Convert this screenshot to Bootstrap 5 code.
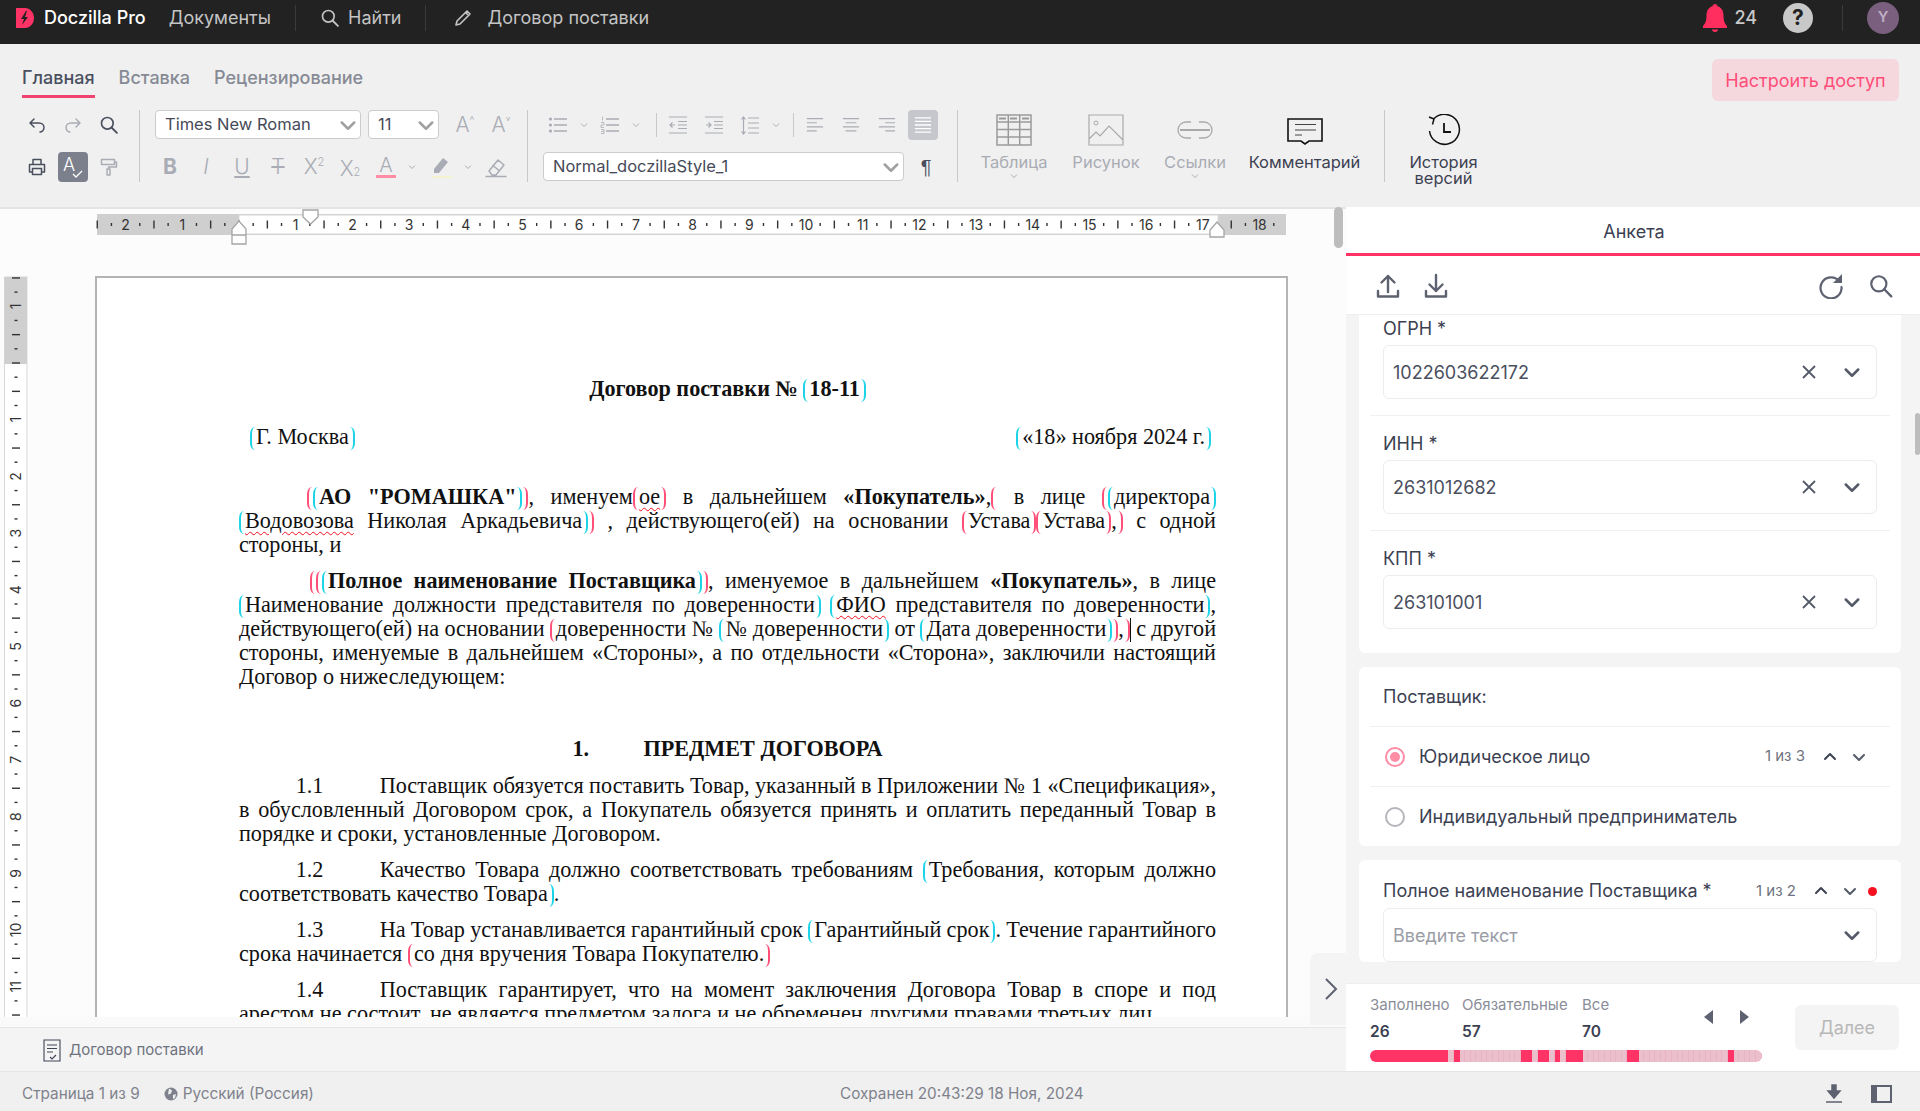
<!DOCTYPE html>
<html lang="ru">
<head>
  <meta charset="UTF-8" />
  <title>Doczilla Pro</title>
  <link href="https://cdn.jsdelivr.net/npm/bootstrap@5.3.3/dist/css/bootstrap.min.css" rel="stylesheet" />
  <style>
    body { font-family:Inter,"Noto Sans",sans-serif; height:1111px; overflow:hidden; color:#3c4152; background:#f0f0f0; }
    svg { display:block; }
    .ico { fill:none; stroke:currentColor; stroke-width:1.5; stroke-linecap:round; stroke-linejoin:round; }

    .topbar { height:44px; background:#222; color:#c4c4c4; font-size:18px; padding:0 0 9px 16px; flex:none; }
    .brand { color:#fff; font-size:18px; font-weight:500; margin-left:10px; margin-right:23px; }
    .top-sep { width:1px; height:26px; background:#3a3a3a; }
    .top-alert { color:#c8c8c8; font-weight:500; margin-left:6px; }
    .help { width:30px; height:30px; border-radius:50%; background:#c8c8c8; color:#222; font-weight:700; font-size:21px; margin-left:26px; margin-right:29px; }
    .ava { width:32px; height:32px; border-radius:50%; background:#7a5f7e; color:#bfaec3; font-weight:600; font-size:15px; }
    .top-right { padding-right:21px; }
    .pen { margin-left:27px; margin-right:14px; }

    .ribbon { height:163px; background:#f0f0f0; flex:none; }
    .rib-top { height:66px; padding-left:22px; padding-right:21px; }
    .rtab { margin-top:20px; height:34px; line-height:28px; margin-right:24px; font-size:18px; font-weight:500; color:#868a95; }
    .rtab.on { color:#4a4f5e; height:34px; border-bottom:3px solid #f0446f; }
    .share { margin-top:15px; height:42px; width:187px; background:#f5d8de; color:#ff4d78; border-radius:6px; font-size:18px; }
    .tools { height:72px; padding-left:19px; }
    .g1 { width:120px; } .g2 { width:372px; } .g3 { width:414px; }
    .rsep { width:1px; height:72px; background:#c9c9c9; flex:none; }
    .g2,.g3 { margin-left:15px; }
    .trow { height:30px; } .trow + .trow { margin-top:12px; }
    .tb { width:36px; height:30px; color:#a9acb4; font-size:21px; flex:none; font-weight:300; }
    .tb.dk { color:#4a4f5e; }
    .tb sup,.tb sub { font-size:11px; }
    .pil { font-family:"Liberation Sans",sans-serif; font-size:20px; }
    .neg { margin-left:-3px; }
    .erase { margin-left:2px; }
    .cr { width:16px; color:#a9acb4; flex:none; }
    .pick { background:#fff; border:1px solid #ccc; border-radius:4px; height:29px; padding:0 2px 0 9px; font-size:16.5px; color:#464a58; }
    .pick svg { color:#a0a0a0; }
    .p-font { width:206px; } .p-size { width:71px; margin-left:7px; margin-right:4px; } .p-style { width:361px; margin-right:4px; }
    .vl1,.vl2 { width:1px; height:24px; background:#c9c9c9; }
    .vl1 { margin:0 3px 0 12px; } .vl2 { margin:0 3px 0 9px; }
    .spell { width:30px; height:30px; margin:0 3px; background:#7b808c; color:#fff; border-radius:4px; }
    .just { width:30px; height:30px; margin:0 3px; background:#c5c7cc; color:#fff; border-radius:4px; }
    .big { height:97px; text-align:center; font-size:16.5px; line-height:16px; color:#a9acb4; flex:none; }
    .big svg.pic { margin:4px auto 8px; }
    .big.dk { color:#3c4152; }
    .b1 { width:112px; } .b2 { width:72px; } .b3 { width:106px; } .b4 { width:113px; margin-right:23px; } .b5 { width:117px; }
    .big .cr { margin:1px auto 0; }

    .work { min-height:0; }
    .leftside { width:1346px; flex:none; }
    .docview { background:#fcfcfc; border-top:2px solid #e4e4e4; min-height:0; overflow:hidden; }
    .pagerow { min-height:0; }
    .sheet { width:1193px; height:900px; background:#fff; border:2px solid #b4b4b4; border-bottom:0; padding:99px 70px 0 142px; font-family:"Liberation Serif",serif; font-size:22.2px; line-height:24px; color:#111; flex:none; }
    .one { height:24px; white-space:nowrap; }
    .city { padding-left:11px; padding-right:5px; }
    .ln { height:24px; text-align:justify; text-align-last:justify; white-space:nowrap; word-spacing:-1px; }
    .ln.end { text-align-last:left; word-spacing:0; }
    .gap12 { margin-top:12px; } .gap13 { margin-top:13px; } .gap36 { margin-top:36px; } .gap48 { margin-top:48px; }
    .ind { padding-left:68px; } .ind2 { padding-left:71px; }
    .num { display:inline-block; width:84px; margin-left:56.7px; }
    .sec-no { display:inline-block; width:71px; text-align:left; }
    .bo,.bc { display:inline-block; width:6px; height:23px; vertical-align:-6px; border-style:solid; border-width:0; }
    .bo { border-left-width:2px; border-radius:5px 0 0 5px / 7px 0 0 7px; }
    .bc { border-right-width:2px; border-radius:0 5px 5px 0 / 0 7px 7px 0; }
    .cy { border-color:#1cd3e8; } .rd { border-color:#ff5079; }
    .wav { text-decoration:underline wavy #f01020; text-decoration-thickness:1px; text-underline-offset:3px; }
    .caret-bar { display:inline-block; width:1px; height:24px; background:#111; vertical-align:-6px; }

    .toggle { position:absolute; right:0; top:746px; width:36px; height:72px; background:#f4f4f4; border-radius:8px 0 0 0; color:#5d6170; padding-left:6px; }
    .vscroll { position:absolute; top:0; right:3px; width:9px; height:41px; background:#bdbdbd; border-radius:5px; }
    .tabstrip { height:10px; background:#fafafa; flex:none; }
    .doctabs { height:44px; background:#f4f4f4; flex:none; border-top:1px solid #e6e6e6; font-size:15px; color:#6f7380; padding:2px 0 0 43px; }

    .panel { width:574px; background:#f4f4f4; }
    .ptitle { height:49px; background:#fff; border-bottom:3px solid #ff3366; font-size:18px; padding:3px 0 0 2px; }
    .ptools { height:59px; background:#fff; color:#5d6170; border-bottom:1px solid #eee; padding:2px 26px 0 30px; flex:none; }
    .ptools svg + svg { margin-left:24px; }
    .pbody { background:#f4f4f4; overflow:hidden; min-height:0; padding:0 19px 0 13px; }
    .sect { background:#fff; border-radius:0 0 6px 6px; padding:0 24px; margin-bottom:14px; }
    .sect-first { padding-top:2px; }
    .sect2 { border-radius:6px; padding:0 11px; }
    .fld-lab { font-size:18px; line-height:24px; }
    .fld { height:54px; border:1px solid #ececec; border-radius:6px; padding:0 14px 0 9px; font-size:18px; color:#4a4f5e; }
    .fld input { border:0; outline:0; padding:0; background:none; font-size:18px; color:#4a4f5e; min-width:0; }
    .fld input::placeholder { color:#9a9da6; opacity:1; }
    .fld svg { color:#555a68; }
    .x-ic { margin-right:25px; }
    .hr1 { height:1px; background:#f0f0f0; margin:16px -13px 0; }
    .sec-head { height:59px; padding-left:13px; font-size:18px; }
    .rad-row { height:60px; border-top:1px solid #f0f0f0; padding:0 23px 0 15px; font-size:18px; }
    .rad { width:20px; height:20px; border-radius:50%; border:2px solid #b4b6bb; margin-right:14px; flex:none; }
    .rad.on { border-color:#ff8ba5; position:relative; }
    .rad.on::after { content:""; position:absolute; inset:3px; border-radius:50%; background:#ff8ba5; }
    .cnt { font-size:15px; color:#6f7380; margin-right:17px; }
    .chev2 { color:#555a68; margin-left:13px; }
    .dot { width:9px; height:9px; border-radius:50%; background:#f5101f; margin-left:10px; }
    .sect-top { padding-top:19px; }
    .fld-gap { margin-top:5px; }
    .pfoot { height:88px; background:#fff; border-top:1px solid #eee; flex:none; padding:12px 21px 0 24px; }
    .st-lab { font-size:15px; color:#8a8d99; line-height:18px; }
    .st-num { font-size:15.500px; font-weight:600; line-height:20px; margin-top:8px; }
    .st1 { width:92px; } .st2 { width:120px; } .st3 { width:60px; }
    .bar { width:392px; height:12px; border-radius:6px; overflow:hidden; margin-top:8px; }
    .seg { flex:1 1 0; background:#ecbfcc; box-shadow:inset -1px 0 #e8b4c3; }
    .seg.fill { background:#ff3366; box-shadow:none; }
    .tris { margin-left:62px; padding-top:14px; }
    .tri { width:0; height:0; border-style:solid; border-color:transparent; border-width:7px 0; }
    .tri.l { border-right:9px solid #5d6170; } .tri.r { border-left:9px solid #5d6170; margin-left:27px; }
    .next { width:104px; height:45px; background:#f4f4f4; color:#b8b8b8; border-radius:6px; font-size:18px; margin-top:9px; }
    .pagethumb { position:absolute; right:0; top:206px; width:5px; height:42px; background:#bdbdbd; border-radius:3px; }

    .status { height:40px; background:#f0f0f0; border-top:1px solid #e4e4e4; flex:none; font-size:15.3px; color:#7f828c; padding:5px 28px 0 22px; }
    .st-left { width:818px; }
    .globe { margin:0 5px 0 24px; }
    .st-ic { color:#5d6170; }
    .st-ic2 { margin-left:28px; }
  </style>
</head>
<body class="d-flex flex-column">

  <svg width="0" height="0" class="position-absolute">
    <symbol id="chev" viewBox="0 0 16 16"><path d="M3 6l5 5 5-5" fill="none" stroke="currentColor" stroke-width="2" stroke-linecap="round" stroke-linejoin="round"/></symbol>
    <symbol id="chevup" viewBox="0 0 16 16"><path d="M3 10l5-5 5 5" fill="none" stroke="currentColor" stroke-width="2" stroke-linecap="round" stroke-linejoin="round"/></symbol>
    <symbol id="thin" viewBox="0 0 10 10"><path d="M2 3.500l3 3 3-3" fill="none" stroke="currentColor" stroke-width="1"/></symbol>
    <symbol id="cross" viewBox="0 0 16 16"><path d="M2 2l12 12M14 2L2 14" fill="none" stroke="currentColor" stroke-width="1.800"/></symbol>
    <symbol id="search" viewBox="0 0 24 24"><circle cx="10" cy="10" r="7" fill="none" stroke="currentColor" stroke-width="2"/><path d="M15 15l6.500 6.500" fill="none" stroke="currentColor" stroke-width="2.200" stroke-linecap="round"/></symbol>
    <symbol id="lines-l" viewBox="0 0 20 20"><path d="M1 3h18M1 7.500h11M1 12h18M1 16.500h11" stroke="currentColor" stroke-width="1.300"/></symbol>
    <symbol id="lines-c" viewBox="0 0 20 20"><path d="M1 3h18M4 7.500h12M1 12h18M4 16.500h12" stroke="currentColor" stroke-width="1.300"/></symbol>
    <symbol id="lines-r" viewBox="0 0 20 20"><path d="M1 3h18M8 7.500h11M1 12h18M8 16.500h11" stroke="currentColor" stroke-width="1.300"/></symbol>
    <symbol id="lines-j" viewBox="0 0 20 20"><path d="M1 2h18M1 6h18M1 10h18M1 14h18M1 18h18" stroke="currentColor" stroke-width="1.400"/></symbol>
  </svg>

  <header class="topbar d-flex align-items-center">
    <svg width="18" height="20" viewBox="0 0 18 20"><path d="M0 0h9c5 0 9 4.500 9 10s-4 10-9 10H2l-2 0z" fill="#ff3366"/><path d="M10 3L5 11h3l-2 6 6-8H9l2-6z" fill="#222"/></svg>
    <span class="brand">Doczilla Pro</span>
    <span>Документы</span>
    <span class="top-sep ms-4"></span>
    <svg class="ms-4" width="20" height="20"><use href="#search"/></svg>
    <span class="ms-2">Найти</span>
    <span class="top-sep ms-4"></span>
    <svg class="pen" width="20" height="20" viewBox="0 0 20 20"><path d="M3 17l1-4L14 3l3 3L7 16z M12.500 4.500l3 3" fill="none" stroke="currentColor" stroke-width="1.600" stroke-linejoin="round"/></svg>
    <span>Договор поставки</span>
    <div class="ms-auto d-flex align-items-center top-right">
      <svg width="26" height="30" viewBox="0 0 26 30"><path d="M13 1c1.500 0 2.500 1 2.500 2.300C20 4.500 21.500 8.500 21.500 13c0 4.500 1 7.500 3.500 10v2H1v-2c2.500-2.500 3.500-5.500 3.500-10 0-4.500 1.500-8.500 6-9.700C10.500 2 11.500 1 13 1zM10 26.500h6c0 1.500-1.200 2.500-3 2.500s-3-1-3-2.500z" fill="#ff2e5f"/></svg>
      <span class="top-alert">24</span>
      <span class="help d-flex align-items-center justify-content-center">?</span>
      <span class="top-sep me-4"></span>
      <span class="ava d-flex align-items-center justify-content-center">Y</span>
    </div>
  </header>

  <section class="ribbon">
    <div class="rib-top d-flex">
      <div class="rtab on">Главная</div>
      <div class="rtab">Вставка</div>
      <div class="rtab">Рецензирование</div>
      <div class="share ms-auto d-flex align-items-center justify-content-center">Настроить доступ</div>
    </div>
    <div class="tools d-flex">
      <div class="g1">
        <div class="trow d-flex">
          <div class="tb dk d-flex align-items-center justify-content-center"><svg class="ico" width="20" height="20" viewBox="0 0 20 20"><path d="M7 4L3 8l4 4M3 8h9c3 0 5 2 5 4.500S15 17 13 17"/></svg></div>
          <div class="tb d-flex align-items-center justify-content-center"><svg class="ico" width="20" height="20" viewBox="0 0 20 20"><path d="M13 4l4 4-4 4M17 8H8c-3 0-5 2-5 4.500S5 17 7 17"/></svg></div>
          <div class="tb dk d-flex align-items-center justify-content-center"><svg width="20" height="20"><use href="#search"/></svg></div>
        </div>
        <div class="trow d-flex">
          <div class="tb dk d-flex align-items-center justify-content-center"><svg class="ico" width="20" height="20" viewBox="0 0 20 20"><path d="M6 7V2.500h8V7M5 15H2.500V7.500h15V15H15M5.500 11.500h9v6h-9z"/></svg></div>
          <div class="spell d-flex align-items-center justify-content-center"><svg width="24" height="26" viewBox="0 0 24 26"><text x="2" y="17" font-family="Inter" font-size="18" font-weight="300" fill="#fff">A</text><path d="M12 20l3 3 6-6" fill="none" stroke="#fff" stroke-width="1.300"/></svg></div>
          <div class="tb d-flex align-items-center justify-content-center"><svg class="ico" width="20" height="20" viewBox="0 0 20 20"><path d="M2.500 2.500h13v5h-13zM15.500 5h2v5H9.500v2M8 12h3v6H8z"/></svg></div>
        </div>
      </div>
      <div class="rsep ms-0"></div>
      <div class="g2">
        <div class="trow d-flex">
          <div class="pick p-font d-flex align-items-center justify-content-between">Times New Roman<svg width="20" height="20"><use href="#chev"/></svg></div>
          <div class="pick p-size d-flex align-items-center justify-content-between">11<svg width="20" height="20"><use href="#chev"/></svg></div>
          <div class="tb ms-1 d-flex align-items-center justify-content-center">A<sup>^</sup></div>
          <div class="tb d-flex align-items-center justify-content-center">A<sup>˅</sup></div>
        </div>
        <div class="trow d-flex">
          <div class="tb neg fw-bold d-flex align-items-center justify-content-center">B</div>
          <div class="tb fst-italic d-flex align-items-center justify-content-center">I</div>
          <div class="tb text-decoration-underline d-flex align-items-center justify-content-center">U</div>
          <div class="tb text-decoration-line-through d-flex align-items-center justify-content-center">T</div>
          <div class="tb d-flex align-items-center justify-content-center">X<sup>2</sup></div>
          <div class="tb d-flex align-items-center justify-content-center pt-1">X<sub>2</sub></div>
          <div class="tb d-flex align-items-center justify-content-center"><svg width="22" height="26" viewBox="0 0 22 26"><text x="11" y="18" text-anchor="middle" font-family="Inter" font-size="20" font-weight="300" fill="#a9acb4">A</text><rect x="1" y="21" width="20" height="3" fill="#ff8ba5"/></svg></div>
          <div class="cr d-flex align-items-center justify-content-center"><svg width="10" height="10"><use href="#thin"/></svg></div>
          <div class="tb ms-1 d-flex align-items-center justify-content-center"><svg width="22" height="26" viewBox="0 0 22 26"><path d="M3 15L12 4l5 4-9 11H3z" fill="#a9acb4"/><rect x="1" y="22" width="20" height="2" fill="#f3f3cf"/></svg></div>
          <div class="cr d-flex align-items-center justify-content-center"><svg width="10" height="10"><use href="#thin"/></svg></div>
          <div class="tb erase d-flex align-items-center justify-content-center"><svg class="ico" width="22" height="22" viewBox="0 0 22 22"><path d="M4 15L13 4l6 5-8 10H7zM8 9.500l6 5M1 20.500h20"/></svg></div>
        </div>
      </div>
      <div class="rsep"></div>
      <div class="g3">
        <div class="trow d-flex align-items-center">
          <div class="tb neg d-flex align-items-center justify-content-center"><svg width="20" height="20" viewBox="0 0 20 20"><path d="M6 4h13M6 10h13M6 16h13" stroke="currentColor" stroke-width="1.300"/><circle cx="2.500" cy="4" r="1.600" fill="currentColor"/><circle cx="2.500" cy="10" r="1.600" fill="currentColor"/><circle cx="2.500" cy="16" r="1.600" fill="currentColor"/></svg></div>
          <div class="cr d-flex align-items-center justify-content-center"><svg width="10" height="10"><use href="#thin"/></svg></div>
          <div class="tb d-flex align-items-center justify-content-center"><svg width="20" height="20" viewBox="0 0 20 20"><path d="M6 4h13M6 10h13M6 16h13" stroke="currentColor" stroke-width="1.300"/><path d="M2.500 1.500v4M1 7.500h3v2.500H1v2.500h3M1 14.500h3v4H1M1 16.500h3" fill="none" stroke="currentColor" stroke-width="0.800"/></svg></div>
          <div class="cr d-flex align-items-center justify-content-center"><svg width="10" height="10"><use href="#thin"/></svg></div>
          <div class="vl1"></div>
          <div class="tb d-flex align-items-center justify-content-center"><svg width="20" height="20" viewBox="0 0 20 20"><path d="M1 2h18M10 6.500h9M10 10h9M10 13.500h9M1 18h18M7 10H2M4.500 7.500L2 10l2.500 2.500" fill="none" stroke="currentColor" stroke-width="1.200"/></svg></div>
          <div class="tb d-flex align-items-center justify-content-center"><svg width="20" height="20" viewBox="0 0 20 20"><path d="M1 2h18M10 6.500h9M10 10h9M10 13.500h9M1 18h18M2 10h5M4.500 7.500L7 10l-2.500 2.500" fill="none" stroke="currentColor" stroke-width="1.200"/></svg></div>
          <div class="tb d-flex align-items-center justify-content-center"><svg width="20" height="20" viewBox="0 0 20 20"><path d="M8 3h11M8 8h11M8 13h11M8 18h11M3.500 2v17M1.500 4.500l2-2.500 2 2.500M1.500 16.500l2 2.500 2-2.500" fill="none" stroke="currentColor" stroke-width="1.200"/></svg></div>
          <div class="cr d-flex align-items-center justify-content-center"><svg width="10" height="10"><use href="#thin"/></svg></div>
          <div class="vl2"></div>
          <div class="tb d-flex align-items-center justify-content-center"><svg width="18" height="18"><use href="#lines-l"/></svg></div>
          <div class="tb d-flex align-items-center justify-content-center"><svg width="18" height="18"><use href="#lines-c"/></svg></div>
          <div class="tb d-flex align-items-center justify-content-center"><svg width="18" height="18"><use href="#lines-r"/></svg></div>
          <div class="just d-flex align-items-center justify-content-center"><svg width="18" height="18"><use href="#lines-j"/></svg></div>
        </div>
        <div class="trow d-flex">
          <div class="pick p-style d-flex align-items-center justify-content-between">Normal_doczillaStyle_1<svg width="20" height="20"><use href="#chev"/></svg></div>
          <div class="tb dk pil d-flex align-items-center justify-content-center">¶</div>
        </div>
      </div>
      <div class="rsep"></div>
      <div class="big b1">
        <svg class="pic" width="36" height="32" viewBox="0 0 36 32"><path d="M1 1h34v30H1zM1 8h34M1 15.500h34M1 23h34M12.300 1v30M23.700 1v30" fill="none" stroke="#9a9a9a" stroke-width="1.500"/><path d="M3 4.500h7M14 4.500h7M26 4.500h7" stroke="#9a9a9a" stroke-width="2"/></svg>
        Таблица
        <svg class="cr" width="10" height="10"><use href="#thin"/></svg>
      </div>
      <div class="big b2">
        <svg class="pic" width="36" height="32" viewBox="0 0 36 32"><path d="M1 1h34v30H1zM1 25l7-7 4 4 9-10 14 14" fill="none" stroke="#a9a9a9" stroke-width="1.200"/><circle cx="8" cy="9" r="2" fill="none" stroke="#a9a9a9"/></svg>
        Рисунок
      </div>
      <div class="big b3">
        <svg class="pic" width="36" height="32" viewBox="0 0 36 32"><path d="M14 8H9a8 8 0 000 16h5M22 8h5a8 8 0 010 16h-5" fill="none" stroke="#a9a9a9" stroke-width="1.300"/><path d="M3 16h30" stroke="#a9a9a9" stroke-width="2"/></svg>
        Ссылки
        <svg class="cr" width="10" height="10"><use href="#thin"/></svg>
      </div>
      <div class="big b4 dk">
        <svg class="pic" width="36" height="32" viewBox="0 0 36 32"><path d="M1 5h34v22H22l-4 3-4-3H1z" fill="none" stroke="#111" stroke-width="1.600"/><path d="M8 10.500h21M8 16h21M8 21h7" stroke="#444" stroke-width="1.100"/></svg>
        Комментарий
      </div>
      <div class="rsep"></div>
      <div class="big b5 dk">
        <svg class="pic" width="36" height="32" viewBox="0 0 36 32"><path d="M8 4.500A15 15 0 113.500 17M3 3l5 2-1.500 5.500" fill="none" stroke="#111" stroke-width="1.500"/><path d="M18 9v9h7" fill="none" stroke="#111" stroke-width="1.800"/></svg>
        История<br>версий
      </div>
    </div>
  </section>

  <div class="work flex-grow-1 d-flex position-relative">
    <div class="leftside d-flex flex-column position-relative">
      <div class="docview flex-grow-1 d-flex flex-column">
        <svg id="hruler" width="1344" height="67" class="flex-shrink-0"></svg>
        <div class="pagerow flex-grow-1 d-flex">
          <svg id="vruler" width="95" height="760" class="flex-shrink-0"></svg>
          <article class="sheet">
            <div class="one text-center fw-bold">Договор поставки № <i class="bo cy"></i>18-11<i class="bc cy"></i></div>
            <div class="one d-flex justify-content-between city mt-4">
              <span><i class="bo cy"></i>Г. Москва<i class="bc cy"></i></span>
              <span><i class="bo cy"></i>«18» ноября 2024 г.<i class="bc cy"></i></span>
            </div>

            <div class="ln ind gap36"><i class="bo rd"></i><i class="bo cy"></i><b>АО "РОМАШКА"</b><i class="bc cy"></i><i class="bc rd"></i>, именуем<i class="bo rd"></i><span class="wav">ое</span><i class="bc rd"></i> в дальнейшем <b>«Покупатель»</b>,<i class="bo rd"></i> в лице <i class="bo rd"></i><i class="bo cy"></i>директора<i class="bc cy"></i></div>
            <div class="ln"><i class="bo cy"></i><span class="wav">Водовозова</span> Николая Аркадьевича<i class="bc cy"></i><i class="bc rd"></i> , действующего(ей) на основании <i class="bo rd"></i>Устава<i class="bc rd"></i><i class="bo rd"></i>Устава<i class="bc rd"></i>,<i class="bc rd"></i> с одной</div>
            <div class="ln end">стороны, и</div>

            <div class="ln ind2 gap12"><i class="bo rd"></i><i class="bo rd"></i><i class="bo cy"></i><b>Полное наименование Поставщика</b><i class="bc cy"></i><i class="bc rd"></i>, именуемое в дальнейшем <b>«Покупатель»</b>, в лице</div>
            <div class="ln"><i class="bo cy"></i>Наименование должности представителя по доверенности<i class="bc cy"></i> <i class="bo cy"></i><span class="wav">ФИО</span> представителя по доверенности<i class="bc cy"></i>,</div>
            <div class="ln">действующего(ей) на основании <i class="bo rd"></i>доверенности № <i class="bo cy"></i>№ доверенности<i class="bc cy"></i> от <i class="bo cy"></i>Дата доверенности<i class="bc cy"></i><i class="bc rd"></i>,<i class="bc rd"></i><span class="caret-bar"></span> с другой</div>
            <div class="ln">стороны, именуемые в дальнейшем «Стороны», а по отдельности «Сторона», заключили настоящий</div>
            <div class="ln end">Договор о нижеследующем:</div>

            <div class="one text-center fw-bold gap48"><span class="sec-no">1.</span>ПРЕДМЕТ ДОГОВОРА</div>

            <div class="ln gap13"><span class="num">1.1</span>Поставщик обязуется поставить Товар, указанный в Приложении № 1 «Спецификация»,</div>
            <div class="ln">в обусловленный Договором срок, а Покупатель обязуется принять и оплатить переданный Товар в</div>
            <div class="ln end">порядке и сроки, установленные Договором.</div>

            <div class="ln gap12"><span class="num">1.2</span>Качество Товара должно соответствовать требованиям <i class="bo cy"></i>Требования, которым должно</div>
            <div class="ln end">соответствовать качество Товара<i class="bc cy"></i>.</div>

            <div class="ln gap12"><span class="num">1.3</span>На Товар устанавливается гарантийный срок <i class="bo cy"></i>Гарантийный срок<i class="bc cy"></i>. Течение гарантийного</div>
            <div class="ln end">срока начинается <i class="bo rd"></i>со дня вручения Товара Покупателю.<i class="bc rd"></i></div>

            <div class="ln gap12"><span class="num">1.4</span>Поставщик гарантирует, что на момент заключения Договора Товар в споре и под</div>
            <div class="ln end">арестом не состоит, не является предметом залога и не обременен другими правами третьих лиц.</div>
          </article>
        </div>
      </div>
      <div class="tabstrip"></div>
      <div class="doctabs d-flex align-items-center">
        <svg width="18" height="23" viewBox="0 0 18 23"><path d="M1 1h16v21H1zM4 6h10M4 9.500h10M4 13h6M7 18l2 2 4-4" fill="none" stroke="#3f4454" stroke-width="1.100"/></svg>
        <span class="ms-2">Договор поставки</span>
      </div>
      <div class="vscroll"></div>
      <div class="toggle d-flex align-items-center justify-content-center"><svg width="14" height="24" viewBox="0 0 14 24"><path d="M2 2l10 10L2 22" fill="none" stroke="currentColor" stroke-width="2"/></svg></div>
    </div>

    <aside class="panel flex-grow-1 d-flex flex-column position-relative">
      <div class="ptitle d-flex align-items-center justify-content-center flex-shrink-0">Анкета</div>
      <div class="ptools d-flex align-items-center">
        <svg width="24" height="26" viewBox="0 0 24 26"><path d="M12 19V3M5.500 9.500L12 3l6.500 6.500M2 18v5.500h20V18" fill="none" stroke="currentColor" stroke-width="2.400" stroke-linecap="round" stroke-linejoin="round"/></svg>
        <svg width="24" height="26" viewBox="0 0 24 26"><path d="M12 2v16M5.500 11.500L12 18l6.500-6.500M2 18v5.500h20V18" fill="none" stroke="currentColor" stroke-width="2.400" stroke-linecap="round" stroke-linejoin="round"/></svg>
        <svg class="ms-auto" width="26" height="26" viewBox="0 0 26 26"><path d="M21 8A10.500 10.500 0 1023.500 14" fill="none" stroke="currentColor" stroke-width="2.200" stroke-linecap="round"/><path d="M24 1v9h-9z" fill="currentColor"/></svg>
        <svg width="26" height="26"><use href="#search"/></svg>
      </div>
      <div class="pbody flex-grow-1">
        <div class="sect sect-first">
          <div class="fld-lab">ОГРН *</div>
          <div class="fld d-flex align-items-center mt-1"><input class="flex-grow-1" value="1022603622172"><svg class="x-ic" width="16" height="16"><use href="#cross"/></svg><svg width="20" height="20"><use href="#chev"/></svg></div>
          <div class="hr1"></div>
          <div class="fld-lab mt-3">ИНН *</div>
          <div class="fld d-flex align-items-center mt-1"><input class="flex-grow-1" value="2631012682"><svg class="x-ic" width="16" height="16"><use href="#cross"/></svg><svg width="20" height="20"><use href="#chev"/></svg></div>
          <div class="hr1"></div>
          <div class="fld-lab mt-3">КПП *</div>
          <div class="fld d-flex align-items-center mt-1"><input class="flex-grow-1" value="263101001"><svg class="x-ic" width="16" height="16"><use href="#cross"/></svg><svg width="20" height="20"><use href="#chev"/></svg></div>
          <div class="pb-4"></div>
        </div>
        <div class="sect sect2">
          <div class="sec-head d-flex align-items-center">Поставщик:</div>
          <div class="rad-row d-flex align-items-center">
            <span class="rad on"></span>Юридическое лицо
            <span class="cnt ms-auto">1 из 3</span>
            <svg width="16" height="16"><use href="#chevup"/></svg>
            <svg class="chev2" width="16" height="16"><use href="#chev"/></svg>
          </div>
          <div class="rad-row d-flex align-items-center"><span class="rad"></span>Индивидуальный предприниматель</div>
        </div>
        <div class="sect rounded-top">
          <div class="d-flex align-items-center sect-top">
            <span class="fld-lab">Полное наименование Поставщика *</span>
            <span class="cnt ms-auto">1 из 2</span>
            <svg width="16" height="16"><use href="#chevup"/></svg>
            <svg class="chev2" width="16" height="16"><use href="#chev"/></svg>
            <span class="dot"></span>
          </div>
          <div class="fld d-flex align-items-center fld-gap"><input class="flex-grow-1" placeholder="Введите текст"><svg width="20" height="20"><use href="#chev"/></svg></div>
        </div>
      </div>
      <div class="pfoot d-flex justify-content-between">
        <div>
          <div class="d-flex">
            <div class="st1"><div class="st-lab">Заполнено</div><div class="st-num">26</div></div>
            <div class="st2"><div class="st-lab">Обязательные</div><div class="st-num">57</div></div>
            <div class="st3"><div class="st-lab">Все</div><div class="st-num">70</div></div>
            <div class="d-flex tris"><span class="tri l"></span><span class="tri r"></span></div>
          </div>
          <div class="bar d-flex" id="bar"></div>
        </div>
        <div class="next d-flex align-items-center justify-content-center">Далее</div>
      </div>
      <div class="pagethumb"></div>
    </aside>
  </div>

  <footer class="status d-flex align-items-center">
    <div class="st-left d-flex align-items-center">
      <span>Страница 1 из 9</span>
      <svg class="globe" width="14" height="14" viewBox="0 0 14 14"><circle cx="7" cy="7" r="6.500" fill="#7f828c"/><path d="M5 1.500l3 2-1 3-3 1zM9 8l3-1-1 4-2 1z" fill="#f0f0f0"/></svg>
      <span>Русский (Россия)</span>
    </div>
    <span>Сохранен 20:43:29 18 Ноя, 2024</span>
    <svg class="st-ic ms-auto" width="18" height="20" viewBox="0 0 18 20"><path d="M7 1h4v6h4l-6 7-6-7h4zM1 18h16" fill="currentColor" stroke="currentColor" stroke-width="1.500"/></svg>
    <svg class="st-ic st-ic2" width="21" height="18" viewBox="0 0 21 18"><path d="M1 1h19v16H1z" fill="none" stroke="currentColor" stroke-width="2"/><path d="M1 1h5v16H1z" fill="currentColor"/></svg>
  </footer>

  <script>
    // progress bar: 70 questions, the answered ones are pink
    const filled = [0,1,2,3,4,5,6,7,8,9,10,11,12,13,15,27,28,30,31,33,35,36,37,46,47,64];
    let segs = "";
    for (let i = 0; i < 70; i++) segs += `<span class="seg${filled.includes(i) ? " fill" : ""}"></span>`;
    document.getElementById("bar").innerHTML = segs;

    // rulers, one cm = 56.7px
    const CM = 56.7, TXT = 'font-family="Inter" font-size="14" fill="#333"';
    function hRuler() {
      const zero = 239, y = 5, mid = 15.5;
      let s = `<rect x="97" y="${y}" width="1189" height="21" fill="#cfcfcf"/><rect x="${zero}" y="${y + 1}" width="979" height="19" fill="#fff" stroke="#d8d8d8"/>`;
      for (let n = -2.5; n <= 18.75; n += 0.25) {
        const x = zero + n * CM;
        if (x < 97 || x > 1284) continue;
        const q = Math.round(n * 4) % 4;
        if (q === 0 && n !== 0) s += `<text x="${x}" y="${mid + 5}" text-anchor="middle" ${TXT}>${Math.abs(n)}</text>`;
        else if (q === 2 || q === -2 || n === 0) s += `<rect x="${x - 0.7}" y="${mid - 4}" width="1.400" height="8" fill="#333"/>`;
        else s += `<rect x="${x - 0.7}" y="${mid - 1.500}" width="1.400" height="3" fill="#333"/>`;
      }
      s += `<path d="M303 1h15v7l-7.500 7-7.500-7z" fill="#fff" stroke="#a5a5a5" stroke-width="1.300"/>`;
      s += `<path d="M232 20l7-8 7 8v15h-14zM232 26h14" fill="#fff" stroke="#a5a5a5" stroke-width="1.300"/>`;
      s += `<path d="M1210 21l7-8 7 8v7h-14z" fill="#fff" stroke="#a5a5a5" stroke-width="1.300"/>`;
      document.getElementById("hruler").innerHTML = s;
    }
    function vRuler() {
      const zero = 87, mid = 16;
      let s = `<rect x="4.500" y="1" width="22.500" height="760" fill="#fff" stroke="#d8d8d8"/><rect x="4.500" y="1" width="22.500" height="${zero}" fill="#cfcfcf"/>`;
      for (let n = -1.5; n <= 12; n += 0.25) {
        const y = zero + n * CM;
        const q = Math.round(n * 4) % 4;
        if (q === 0 && n !== 0) s += `<text transform="translate(${mid + 5} ${y}) rotate(-90)" text-anchor="middle" ${TXT}>${Math.abs(n)}</text>`;
        else if (q === 2 || q === -2 || n === 0) s += `<rect x="${mid - 4}" y="${y - 0.7}" width="8" height="1.400" fill="#333"/>`;
        else s += `<rect x="${mid - 1.500}" y="${y - 0.7}" width="3" height="1.400" fill="#333"/>`;
      }
      document.getElementById("vruler").innerHTML = s;
    }
    hRuler();
    vRuler();
  </script>
</body>
</html>
